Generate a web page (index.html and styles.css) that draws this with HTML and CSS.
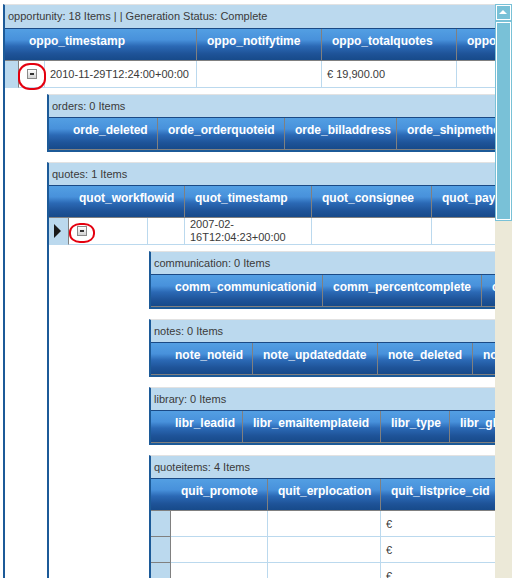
FILE: index.html
```html
<!DOCTYPE html>
<html lang="en">
<head>
    <meta charset="UTF-8">
    <title>Opportunity grid</title>
    <link rel="stylesheet" href="styles.css">
</head>
<body>
    <div class="frame">
        <div class="view">
            <!-- master grid -->
            <div class="grid">
                <div class="grid-caption caption-top">opportunity: 18 Items | | Generation Status: Complete</div>
                <div class="grid-head cols-oppo">
                    <div class="hcell"></div>
                    <div class="hcell">oppo_timestamp</div>
                    <div class="hcell">oppo_notifytime</div>
                    <div class="hcell">oppo_totalquotes</div>
                    <div class="hcell">oppo_stage</div>
                </div>
                <div class="grid-row rows-oppo">
                    <div class="cell sel"></div>
                    <div class="cell expand"><span class="toggle"><span class="mark mark-big"></span></span></div>
                    <div class="cell">2010-11-29T12:24:00+00:00</div>
                    <div class="cell"></div>
                    <div class="cell">€ 19,900.00</div>
                    <div class="cell"></div>
                </div>

                <div class="detail detail-oppo">
                    <div class="grid">
                        <div class="grid-caption">orders: 0 Items</div>
                        <div class="grid-head cols-orde">
                            <div class="hcell"></div>
                            <div class="hcell">orde_deleted</div>
                            <div class="hcell">orde_orderquoteid</div>
                            <div class="hcell">orde_billaddress</div>
                            <div class="hcell">orde_shipmethod</div>
                        </div>
                    </div>

                    <div class="grid">
                        <div class="grid-caption">quotes: 1 Items</div>
                        <div class="grid-head cols-quot">
                            <div class="hcell"></div>
                            <div class="hcell">quot_workflowid</div>
                            <div class="hcell">quot_timestamp</div>
                            <div class="hcell">quot_consignee</div>
                            <div class="hcell">quot_paymentterms</div>
                        </div>
                        <div class="grid-row rows-quot">
                            <div class="cell sel"><span class="pointer"></span></div>
                            <div class="cell expand"><span class="toggle"><span class="mark mark-small"></span></span></div>
                            <div class="cell"></div>
                            <div class="cell wrap">2007-02-<br>16T12:04:23+00:00</div>
                            <div class="cell"></div>
                            <div class="cell"></div>
                        </div>

                        <div class="detail detail-quot">
                            <div class="grid">
                                <div class="grid-caption">communication: 0 Items</div>
                                <div class="grid-head cols-comm">
                                    <div class="hcell"></div>
                                    <div class="hcell">comm_communicationid</div>
                                    <div class="hcell">comm_percentcomplete</div>
                                    <div class="hcell">comm_status</div>
                                </div>
                            </div>

                            <div class="grid">
                                <div class="grid-caption">notes: 0 Items</div>
                                <div class="grid-head cols-note">
                                    <div class="hcell"></div>
                                    <div class="hcell">note_noteid</div>
                                    <div class="hcell">note_updateddate</div>
                                    <div class="hcell">note_deleted</div>
                                    <div class="hcell">note_note</div>
                                </div>
                            </div>

                            <div class="grid">
                                <div class="grid-caption">library: 0 Items</div>
                                <div class="grid-head cols-libr">
                                    <div class="hcell"></div>
                                    <div class="hcell">libr_leadid</div>
                                    <div class="hcell">libr_emailtemplateid</div>
                                    <div class="hcell">libr_type</div>
                                    <div class="hcell">libr_globalid</div>
                                </div>
                            </div>

                            <div class="grid">
                                <div class="grid-caption">quoteitems: 4 Items</div>
                                <div class="grid-head cols-quit">
                                    <div class="hcell"></div>
                                    <div class="hcell">quit_promote</div>
                                    <div class="hcell">quit_erplocation</div>
                                    <div class="hcell">quit_listprice_cid</div>
                                    <div class="hcell">quit_quantity</div>
                                </div>
                                <div class="grid-row cols-quit short">
                                    <div class="cell sel boxed"></div>
                                    <div class="cell"></div>
                                    <div class="cell"></div>
                                    <div class="cell">€</div>
                                    <div class="cell"></div>
                                </div>
                                <div class="grid-row cols-quit short">
                                    <div class="cell sel boxed"></div>
                                    <div class="cell"></div>
                                    <div class="cell"></div>
                                    <div class="cell">€</div>
                                    <div class="cell"></div>
                                </div>
                                <div class="grid-row cols-quit short">
                                    <div class="cell sel boxed"></div>
                                    <div class="cell"></div>
                                    <div class="cell"></div>
                                    <div class="cell">€</div>
                                    <div class="cell"></div>
                                </div>
                                <div class="grid-row cols-quit short">
                                    <div class="cell sel boxed"></div>
                                    <div class="cell"></div>
                                    <div class="cell"></div>
                                    <div class="cell">€</div>
                                    <div class="cell"></div>
                                </div>
                            </div>
                        </div>
                    </div>
                </div>
            </div>
        </div>

        <div class="scrollbar">
            <div class="sb-btn"></div>
            <div class="sb-thumb"></div>
        </div>
    </div>
</body>
</html>
```

FILE: styles.css
```css
body {
    margin: 0;
    background-color: #fff;
    font-family: "Liberation Sans", Arial, sans-serif;
    font-size: 11px;
    color: #3a3a3a;
}
.frame {
    display: flex;
    padding-top: 4px;
}
.view {
    margin-left: 3px;
    width: 492px;
    height: 574px;
    overflow: hidden;
}

/* grid box */
.grid {
    border-top: 1px solid #e2e2e2;
    border-left: 2px solid #1c5a98;
    border-bottom: 2px solid #1c5a98;
    background-color: #fff;
}
.grid + .grid {
    margin-top: 10px;
}
.grid-caption {
    height: 22px;
    line-height: 22px;
    padding-left: 3px;
    background-color: #bbd9ee;
    white-space: nowrap;
}
.caption-top {
    height: 23px;
    line-height: 23px;
}
.grid-head {
    display: grid;
    border-top: 1px solid #1b4a85;
    border-bottom: 1px solid #808080;
}
.hcell {
    box-sizing: border-box;
    height: 31px;
    padding: 5px 10px 0;
    border-right: 1px solid #808080;
    background: linear-gradient(to bottom, #539fe3 0%, #4891db 35%, #2b69b5 55%, #1e5398 80%, #174a8a 100%);
    color: #fff;
    font-size: 12px;
    font-weight: bold;
    line-height: 14px;
    white-space: nowrap;
}
.grid-row {
    display: grid;
}
.cell {
    box-sizing: border-box;
    height: 27px;
    display: flex;
    align-items: center;
    padding: 0 5px;
    border-right: 1px solid #bbd9ee;
    border-bottom: 1px solid #bbd9ee;
    white-space: nowrap;
}
.short .cell {
    height: 26px;
}
.cell.wrap {
    line-height: 13px;
    white-space: normal;
}
.sel {
    background-color: #bbd9ee;
    border-right-color: #808080;
}
.sel.boxed {
    border-bottom-color: #808080;
}
.expand {
    padding-left: 8px;
}

/* column sets */
.cols-oppo { grid-template-columns: 14px 178px 125px 135px 140px; }
.rows-oppo { grid-template-columns: 14px 26px 152px 125px 135px 140px; }
.cols-orde { grid-template-columns: 14px 95px 127px 112px 130px; }
.cols-quot { grid-template-columns: 20px 116px 127px 120px 130px; }
.rows-quot { grid-template-columns: 20px 79px 37px 127px 120px 130px; }
.cols-comm { grid-template-columns: 14px 158px 159px 120px; }
.cols-note { grid-template-columns: 14px 88px 125px 95px 120px; }
.cols-libr { grid-template-columns: 14px 78px 138px 69px 120px; }
.cols-quit { grid-template-columns: 20px 97px 113px 120px 100px; }

/* detail areas under an expanded row */
.detail {
    padding-top: 6px;
}
.detail-oppo {
    padding-left: 42px;
}
.detail-quot {
    padding-left: 100px;
}

/* expand / collapse button */
.toggle {
    position: relative;
    display: inline-block;
    box-sizing: border-box;
    width: 10px;
    height: 10px;
    border: 1px solid #8a8a8a;
    background: linear-gradient(to bottom, #fff, #d2d2d2);
}
.toggle::before {
    content: "";
    position: absolute;
    left: 2px;
    top: 3px;
    width: 4px;
    height: 2px;
    background-color: #333;
}
.mark {
    position: absolute;
    box-sizing: border-box;
    border: 2px solid #e4000f;
}
.mark-big {
    left: -10px;
    top: -7px;
    width: 28px;
    height: 27px;
    border-radius: 12px / 11px;
}
.mark-small {
    left: -9px;
    top: -4px;
    width: 26px;
    height: 20px;
    border-radius: 11px / 9px;
}

/* current row pointer */
.pointer {
    width: 0;
    height: 0;
    border-top: 7px solid transparent;
    border-bottom: 7px solid transparent;
    border-left: 7px solid #1a1a1a;
}

/* vertical scroll bar */
.scrollbar {
    width: 17px;
    height: 574px;
    background-color: #ece9d8;
}
.sb-btn,
.sb-thumb {
    box-sizing: border-box;
    border: 1px solid #79c1d7;
    background-color: #79c1d7;
    box-shadow: inset 0 0 0 1px #fff;
}
.sb-btn {
    position: relative;
    height: 17px;
}
.sb-btn::after {
    content: "";
    position: absolute;
    left: 3px;
    top: 5px;
    border-left: 4px solid transparent;
    border-right: 4px solid transparent;
    border-bottom: 4px solid #fff;
}
.sb-thumb {
    height: 200px;
}
```
